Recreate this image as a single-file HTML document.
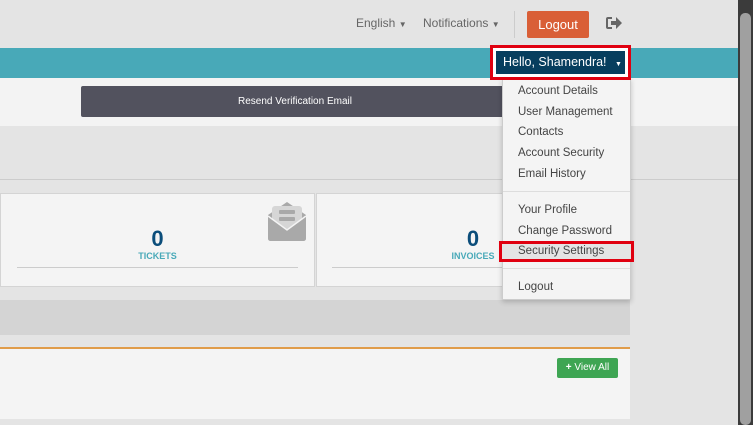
<!DOCTYPE html>
<html><head><style>
*{box-sizing:border-box;margin:0;padding:0}
body{width:753px;height:425px;overflow:hidden;background:#e4e4e4;font-family:"Liberation Sans",sans-serif;position:relative}
.a{position:absolute}
.dd div{position:absolute;left:15px;font-size:11.5px;color:#444;white-space:nowrap}
</style></head><body>
<div class="a" style="left:0;top:0;width:738px;height:48px;background:#e4e4e4"></div>
<div class="a" style="left:356px;top:16px;font-size:12px;color:#666">English <span style="font-size:8px">▼</span></div>
<div class="a" style="left:423px;top:16px;font-size:12px;color:#666">Notifications <span style="font-size:8px">▼</span></div>
<div class="a" style="left:514px;top:11px;width:1px;height:27px;background:#ccc"></div>
<div class="a" style="left:527px;top:11px;width:62px;height:27px;background:#d95f37;border-radius:2px;color:#fff;font-size:13px;text-align:center;line-height:27px">Logout</div>
<svg class="a" style="left:605px;top:15px" width="18" height="16" viewBox="0 0 18 16"><path d="M7 2H3Q1 2 1 4V12Q1 14 3 14H7V12H3V4H7Z" fill="#666"/><path d="M6 6H11V2L17 8L11 14V10H6Z" fill="#666"/></svg>
<div class="a" style="left:0;top:48px;width:738px;height:30px;background:#48a9b8"></div>
<div class="a" style="left:0;top:78px;width:738px;height:48px;background:#f3f3f3"></div>
<div class="a" style="left:81px;top:86px;width:428px;height:31px;background:#52525e;border-radius:2px;color:#fff;font-size:10px;text-align:center;line-height:31px">Resend Verification Email</div>
<div class="a" style="left:0;top:126px;width:738px;height:54px;background:#e4e4e4;border-bottom:1px solid #ccc"></div>
<div class="a" style="left:0;top:193px;width:315px;height:94px;background:#f4f4f4;border:1px solid #d4d4d4"></div>
<div class="a" style="left:316px;top:193px;width:314px;height:94px;background:#f4f4f4;border:1px solid #d4d4d4"></div>
<svg class="a" style="left:267px;top:201px" width="40" height="40" viewBox="0 0 40 40"><path d="M1 14L20 1L39 14V37Q39 40 36 40H4Q1 40 1 37Z" fill="#a9a9a9"/><rect x="5" y="5" width="30" height="26" rx="3" fill="#d6d6d6"/><path d="M1 15L20 29L39 15V37Q39 40 36 40H4Q1 40 1 37Z" fill="#a9a9a9"/><path d="M1 15L20 29L39 15" fill="none" stroke="#f4f4f4" stroke-width="1.5"/><rect x="12" y="9" width="16" height="4" rx="1" fill="#a9a9a9"/><rect x="12" y="16" width="16" height="4" rx="1" fill="#a9a9a9"/></svg>
<div class="a" style="left:0;top:226px;width:315px;text-align:center;font-size:22px;font-weight:bold;color:#0b4d7a">0</div>
<div class="a" style="left:0;top:251px;width:315px;text-align:center;font-size:9px;font-weight:bold;color:#48a9b8">TICKETS</div>
<div class="a" style="left:17px;top:267px;width:281px;height:1px;background:#ccc"></div>
<div class="a" style="left:316px;top:226px;width:314px;text-align:center;font-size:22px;font-weight:bold;color:#0b4d7a">0</div>
<div class="a" style="left:316px;top:251px;width:314px;text-align:center;font-size:9px;font-weight:bold;color:#48a9b8">INVOICES</div>
<div class="a" style="left:332px;top:267px;width:281px;height:1px;background:#ccc"></div>
<div class="a" style="left:0;top:300px;width:630px;height:35px;background:#d4d4d4"></div>
<div class="a" style="left:0;top:347px;width:630px;height:72px;background:#f4f4f4;border-top:2px solid #e09c4a"></div>
<div class="a" style="left:557px;top:358px;width:61px;height:20px;background:#3ea553;border-radius:2px;color:#fff;font-size:10px;text-align:center;line-height:20px"><b>+</b> View All</div>
<div class="a dd" style="left:502px;top:78px;width:129px;height:222px;background:#f4f4f4;border:1px solid #ccc;box-shadow:0 2px 5px rgba(0,0,0,.2)">
<div style="top:6px">Account Details</div><div style="top:27px">User Management</div><div style="top:47px">Contacts</div><div style="top:68px">Account Security</div><div style="top:89px">Email History</div>
<span class="a" style="left:0;top:112px;width:127px;height:1px;background:#ddd"></span>
<div style="top:125px">Your Profile</div><div style="top:146px">Change Password</div>
<span class="a" style="left:0;top:189px;width:127px;height:1px;background:#ddd"></span>
<div style="top:202px">Logout</div>
</div>
<div class="a" style="left:499px;top:241px;width:135px;height:21px;border:3px solid #e00010;background:#e4e4e4;font-size:11.5px;color:#444;padding-left:16px;line-height:15px;white-space:nowrap">Security Settings</div>
<div class="a" style="left:490px;top:45px;width:141px;height:35px;border:3px solid #e00010;background:#fff;padding:3px"><div style="background:#073e5e;height:23px;color:#fff;font-size:12.5px;line-height:23px;padding-left:7px;white-space:nowrap">Hello, Shamendra! <span style="font-size:7px;margin-left:5px">▼</span></div></div>
<div class="a" style="left:738px;top:0;width:15px;height:425px;background:#3b3b3b"></div>
<div class="a" style="left:740px;top:13px;width:11px;height:412px;background:#a0a0a0;border-radius:5px"></div>
</body></html>
